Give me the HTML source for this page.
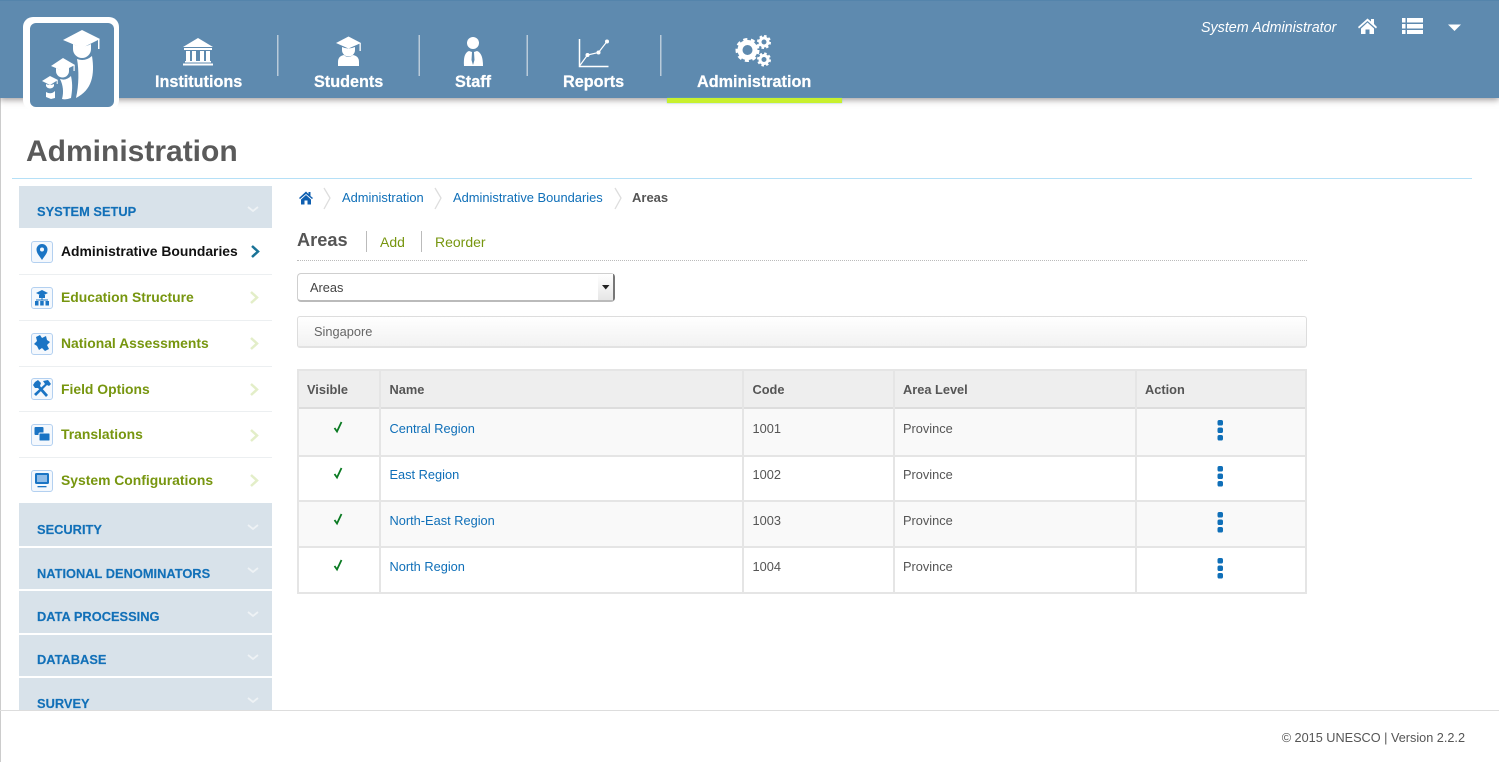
<!DOCTYPE html>
<html lang="en"><head><meta charset="utf-8"><title>Administration</title>
<style>
html,body{margin:0;padding:0;background:#fff}
body{width:1499px;height:762px;overflow:hidden;position:relative;font-family:"Liberation Sans",Arial,sans-serif;color:#555}
.t{position:absolute;white-space:nowrap;line-height:18px;font-size:12.8px}
.b{font-weight:bold}
.a{position:absolute}
.nav{color:#fff;font-weight:bold;font-size:16.2px;top:73px;-webkit-text-stroke:.25px #fff}
.hd{position:absolute;left:19px;width:253px;background:#d8e2ea}
.hdt{color:#1270b8;font-weight:bold;font-size:12.85px;left:37px;-webkit-text-stroke:.15px #1270b8}
.it{color:#77960f;font-weight:bold;font-size:13.9px;left:61px}
.sep{position:absolute;left:19px;width:253px;height:1px;background:#eceff1}
.box{position:absolute;left:31px;width:20px;height:20px;border:1.5px solid #b3d0f0;border-radius:3px;background:#f4f8fd}
.cell{position:absolute;background:#e5e5e5}
a{text-decoration:none;color:#0f6fb8}
</style></head><body>
<div class="a" style="left:0;top:98px;width:1px;height:664px;background:#ccc"></div>
<div class="a" style="left:0;top:0;width:1499px;height:98px;background:#5e8aaf;border-top:1px solid #5484ab;box-sizing:border-box;box-shadow:0 2px 6px rgba(70,60,60,.5)"></div>
<div class="a" style="left:667px;top:98px;width:175px;height:5px;background:#c8f02e;box-shadow:0 0 1px #6cc"></div>
<div class="a" style="left:23px;top:17px;width:96px;height:93px;background:#fff;border-radius:10px"></div>
<div class="a" style="left:30px;top:23px;width:84px;height:84px;background:#5e8aaf;border-radius:6px"></div>

<svg class="a" style="left:0;top:0" width="1499" height="112" viewBox="0 0 1499 112" fill="#fff">
 <!-- logo -->
 <path d="M63 40L82 30L100 39L82 48Z"/><rect x="98" y="39" width="1.500" height="10"/>
 <path d="M73 44Q82 49 91 44V49A9 9 0 0 1 73 49Z"/>
 <path d="M77 59Q85 62 92 56C95 75 92 90 76 98C79 85 79 70 77 59Z"/>
 <path d="M51 66L63 58L75 65L63 71Z"/><rect x="73.500" y="65" width="1.200" height="6"/>
 <path d="M56 68Q63 72 69 67V71A6.500 6.500 0 0 1 56 71Z"/>
 <path d="M60 79Q66 81 71 76C73 85 72 92 71 98Q66 100 62 99C64 92 63 85 60 79Z"/>
 <path d="M42 81L50 76L58 80L50 85Z"/><rect x="56.700" y="80" width="1" height="4"/>
 <path d="M46 84Q50 86 54 84V86A4.500 4.500 0 0 1 46 86Z"/>
 <path d="M46 92Q51 95 55 91V98L51 99L46 97Z"/>
 <!-- institutions -->
 <path d="M198 38L213 47H183Z"/><rect x="184" y="48" width="28" height="2"/>
 <rect x="186" y="51" width="4" height="10"/><rect x="192" y="51" width="4" height="10"/><rect x="200" y="51" width="4" height="10"/><rect x="206" y="51" width="4" height="10"/>
 <rect x="185" y="61" width="26" height="1.500"/><rect x="183" y="63.500" width="30" height="2"/>
 <!-- students -->
 <path d="M336 43L348.500 36.500L361 43L348.500 48.500Z"/><rect x="359.500" y="43" width="1.300" height="8"/>
 <path d="M342 47Q348 50 355 47V50A6.500 6.500 0 0 1 342 50Z"/>
 <path d="M338 66V62Q338 56 344 55Q348 59 353 55Q359 56 359 62V66Z"/>
 <!-- staff -->
 <circle cx="473" cy="43" r="6"/>
 <path d="M464 66Q463 53 469 51L472 52L471.500 60L473 65L474.500 60L474 52L477 51Q483 53 483 66Z"/>
 <!-- reports -->
 <g fill="none" stroke="#fff"><path d="M579.500 39V66.500H608.500" stroke-width="1.500"/><path d="M579.500 66L587.500 55L598.500 52.500L607 41.500" stroke-width="1.200"/></g>
 <circle cx="587.500" cy="55" r="2"/><circle cx="598.500" cy="52.500" r="2"/><circle cx="607" cy="41.500" r="2"/>
 <!-- gears -->
 <g fill="none" stroke="#fff">
  <circle cx="747.500" cy="50" r="7.500" stroke-width="5"/><circle cx="747.500" cy="50" r="10.500" stroke-width="3" stroke-dasharray="4 3.500"/>
  <circle cx="764" cy="42" r="4" stroke-width="3"/><circle cx="764" cy="42" r="6" stroke-width="2" stroke-dasharray="2.500 2.200"/>
  <circle cx="764" cy="59.500" r="4" stroke-width="3"/><circle cx="764" cy="59.500" r="6" stroke-width="2" stroke-dasharray="2.500 2.200"/>
 </g>
 <!-- separators -->
 <g fill="#b9cbda"><rect x="277" y="35" width="1.500" height="41"/><rect x="418.500" y="35" width="1.500" height="41"/><rect x="526.500" y="35" width="1.500" height="41"/><rect x="660" y="35" width="1.500" height="41"/></g>
 <!-- top right -->
 <path d="M1358 27L1367.500 18.500L1371 21.500V19H1374V24L1377 27L1376 28.500L1367.500 21L1359 28.500Z"/>
 <path d="M1361 28.500L1367.500 22.500L1374 28.500V34H1369.500V29.500H1365.500V34H1361Z"/>
 <rect x="1402" y="18" width="3.500" height="4.500"/><rect x="1407" y="18" width="16" height="4.500"/>
 <rect x="1402" y="24" width="3.500" height="4.500"/><rect x="1407" y="24" width="16" height="4.500"/>
 <rect x="1402" y="30" width="3.500" height="4"/><rect x="1407" y="30" width="16" height="4"/>
 <path d="M1448 24.500H1461L1454.500 31Z"/>
</svg>

<div class="t nav" style="left:155px">Institutions</div>
<div class="t nav" style="left:314px">Students</div>
<div class="t nav" style="left:455px">Staff</div>
<div class="t nav" style="left:563px">Reports</div>
<div class="t nav" style="left:697px">Administration</div>
<div class="t" style="left:1201px;top:19px;color:#fff;font-style:italic;font-size:14.300px">System Administrator</div>

<div class="t b" style="left:26px;top:135px;font-size:30px;line-height:34px;color:#5a5a5a">Administration</div>
<div class="a" style="left:12px;top:178px;width:1460px;height:1px;background:#b5e0f7"></div>

<!-- sidebar -->
<div class="a" style="left:0;top:0;width:290px;height:710px;overflow:hidden">
 <div class="hd" style="top:186px;height:42px"></div>
 <div class="hd" style="top:503px;height:43px"></div>
 <div class="hd" style="top:548px;height:41px"></div>
 <div class="hd" style="top:591px;height:42px"></div>
 <div class="hd" style="top:635px;height:41px"></div>
 <div class="hd" style="top:678px;height:42px"></div>
 <div class="t hdt" style="top:203px">SYSTEM SETUP</div>
 <div class="t hdt" style="top:521px">SECURITY</div>
 <div class="t hdt" style="top:565px">NATIONAL DENOMINATORS</div>
 <div class="t hdt" style="top:608px">DATA PROCESSING</div>
 <div class="t hdt" style="top:651px">DATABASE</div>
 <div class="t hdt" style="top:695px">SURVEY</div>
 <svg class="a" style="left:0;top:0" width="290" height="710" fill="none" stroke="#eef2f5" stroke-width="1.800">
  <path d="M248 207L253 211L258 207"/><path d="M248 525L253 529L258 525"/><path d="M248 568L253 572L258 568"/><path d="M248 612L253 616L258 612"/><path d="M248 655L253 659L258 655"/><path d="M248 698L253 702L258 698"/>
 </svg>
</div>
<div class="sep" style="top:274px"></div><div class="sep" style="top:320px"></div><div class="sep" style="top:366px"></div><div class="sep" style="top:411px"></div><div class="sep" style="top:457px"></div>
<div class="t it" style="top:242px;color:#111">Administrative Boundaries</div>
<div class="t it" style="top:288px">Education Structure</div>
<div class="t it" style="top:334px">National Assessments</div>
<div class="t it" style="top:380px">Field Options</div>
<div class="t it" style="top:425px">Translations</div>
<div class="t it" style="top:471px">System Configurations</div>
<div class="box" style="top:241px"></div><div class="box" style="top:287px"></div><div class="box" style="top:333px"></div><div class="box" style="top:378px"></div><div class="box" style="top:424px"></div><div class="box" style="top:470px"></div>
<svg class="a" style="left:0;top:0;" width="290" height="510" fill="#1a74c4">
 <!-- pin -->
 <path fill-rule="evenodd" d="M42 244A5.500 5.500 0 0 1 47.500 249.500C47.500 253.500 44 256.500 42 260C40 256.500 36.500 253.500 36.500 249.500A5.500 5.500 0 0 1 42 244ZM42 247.500A2 2 0 1 0 42 251.500A2 2 0 1 0 42 247.500Z"/>
 <!-- structure -->
 <path d="M36 293L42 290L48 293L42 296Z"/><rect x="39" y="295" width="6" height="3"/><rect x="41.500" y="298" width="1" height="2"/><rect x="36" y="299.500" width="12" height="1"/>
 <rect x="35" y="301" width="3.500" height="4.500"/><rect x="40.200" y="301" width="3.500" height="4.500"/><rect x="45.500" y="301" width="3.500" height="4.500"/>
 <!-- puzzle -->
 <path d="M36 337L40 335L42 338L46 336L47 340L50 342L47 345L49 349L45 351L42 348L39 350L37 346L34 344L37 341Z"/>
 <!-- tools -->
 <path d="M35 382L38 380L41 383L40 386L48 395L46 397L38 388L35 388L33 385Z"/>
 <path d="M43 381L48 380L51 384L49 386L47 385L36 396L34 394L45 384Z"/>
 <!-- translations -->
 <rect x="34.500" y="427" width="9" height="8" rx="1"/><rect x="39" y="433" width="11" height="8" rx="1" stroke="#f4f8fd"/>
 <!-- screen -->
 <rect x="35" y="473" width="14" height="11" rx="1.500"/><rect x="37" y="475" width="10" height="7" fill="#8fbce8"/><rect x="37.500" y="486" width="9" height="1.300"/>
</svg>
<svg class="a" style="left:0;top:0" width="290" height="510" fill="none" stroke-width="2.500">
 <path d="M252 246L258 251.500L252 257" stroke="#1a7397"/>
 <g stroke="#e3eec8"><path d="M251 292L257 297.500L251 303"/><path d="M251 338L257 343.500L251 349"/><path d="M251 384L257 389.500L251 395"/><path d="M251 430L257 435.500L251 441"/><path d="M251 475L257 480.500L251 486"/></g>
</svg>

<!-- breadcrumb -->
<svg class="a" style="left:295px;top:185px" width="340" height="26" fill="none" stroke="#ddd" stroke-width="1.300">
 <path d="M29 3L35 13L29 24"/><path d="M140 3L146 13L140 24"/><path d="M320 3L326 13L320 24"/>
 <path fill="#0f5fb0" stroke="none" d="M4 13L11 6.500L13.500 9V7H15.500V11L18 13L17 14L11 9L5 14ZM6 14.500L11 10L16 14.500V19.500H12.500V15.500H9.500V19.500H6Z"/>
</svg>
<a class="t" style="left:342px;top:189px;font-size:12.9px">Administration</a>
<a class="t" style="left:453px;top:189px;font-size:12.9px">Administrative Boundaries</a>
<div class="t b" style="left:632px;top:189px;font-size:13px">Areas</div>

<div class="t b" style="left:297px;top:231px;font-size:18.2px">Areas</div>
<div class="a" style="left:366px;top:231px;width:1px;height:21px;background:#bbb"></div>
<div class="a" style="left:421px;top:231px;width:1px;height:21px;background:#bbb"></div>
<div class="t" style="left:380px;top:233px;font-size:14px;color:#77960f">Add</div>
<div class="t" style="left:435px;top:233px;font-size:14px;color:#77960f">Reorder</div>
<div class="a" style="left:297px;top:260px;width:1010px;height:0;border-top:1px dotted #bbb"></div>

<!-- select -->
<div class="a" style="left:297px;top:273px;width:318px;height:29px;box-sizing:border-box;border:1px solid #cfcfcf;border-right:2px solid #777;border-bottom:2px solid #bbb;border-radius:4px;background:#fff"></div>
<div class="a" style="left:598px;top:274px;width:15px;height:26px;background:linear-gradient(#fff,#e6e6e6)"></div>
<svg class="a" style="left:602px;top:285px" width="8" height="5"><path d="M0 0H7.500L3.750 4.500Z" fill="#222"/></svg>
<div class="t" style="left:310px;top:279px;color:#444">Areas</div>

<div class="a" style="left:297px;top:316px;width:1010px;height:32px;box-sizing:border-box;border:1px solid #ddd;border-bottom:2px solid #e2e2e2;border-radius:3px;background:linear-gradient(#fff,#f2f2f2)"></div>
<div class="t" style="left:314px;top:323px;color:#666">Singapore</div>

<!-- table -->
<div class="a" style="left:297px;top:369px;width:1010px;height:39px;background:#eee"></div>
<div class="a" style="left:297px;top:408px;width:1010px;height:47px;background:#f9f9f9"></div>
<div class="a" style="left:297px;top:501px;width:1010px;height:46px;background:#f9f9f9"></div>
<div class="cell" style="left:297px;top:369px;width:1010px;height:2px"></div>
<div class="cell" style="left:297px;top:407px;width:1010px;height:2px;background:#ddd"></div>
<div class="cell" style="left:297px;top:454.500px;width:1010px;height:2px"></div>
<div class="cell" style="left:297px;top:500px;width:1010px;height:2px"></div>
<div class="cell" style="left:297px;top:546px;width:1010px;height:2px"></div>
<div class="cell" style="left:297px;top:592px;width:1010px;height:2px"></div>
<div class="cell" style="left:297px;top:369px;width:2px;height:225px"></div>
<div class="cell" style="left:378.500px;top:369px;width:2px;height:225px"></div>
<div class="cell" style="left:741.500px;top:369px;width:2px;height:225px"></div>
<div class="cell" style="left:892.500px;top:369px;width:2px;height:225px"></div>
<div class="cell" style="left:1134.500px;top:369px;width:2px;height:225px"></div>
<div class="cell" style="left:1305px;top:369px;width:2px;height:225px"></div>
<div class="t b" style="left:307px;top:381px">Visible</div>
<div class="t b" style="left:389.500px;top:381px">Name</div>
<div class="t b" style="left:752.500px;top:381px">Code</div>
<div class="t b" style="left:903px;top:381px">Area Level</div>
<div class="t b" style="left:1145px;top:381px">Action</div>

<a class="t" style="left:389.500px;top:420px">Central Region</a><div class="t" style="left:752.500px;top:420px">1001</div><div class="t" style="left:903px;top:420px">Province</div>
<a class="t" style="left:389.500px;top:466px">East Region</a><div class="t" style="left:752.500px;top:466px">1002</div><div class="t" style="left:903px;top:466px">Province</div>
<a class="t" style="left:389.500px;top:512px">North-East Region</a><div class="t" style="left:752.500px;top:512px">1003</div><div class="t" style="left:903px;top:512px">Province</div>
<a class="t" style="left:389.500px;top:558px">North Region</a><div class="t" style="left:752.500px;top:558px">1004</div><div class="t" style="left:903px;top:558px">Province</div>

<svg class="a" style="left:0;top:0" width="1499" height="600">
 <g fill="none" stroke="#0a7a22" stroke-width="1.800">
  <path d="M334.500 428L337 431.500L341.500 422"/><path d="M334.500 474L337 477.500L341.500 468"/><path d="M334.500 520L337 523.500L341.500 514"/><path d="M334.500 566L337 569.500L341.500 560"/>
 </g>
 <g fill="#0f6fb8">
  <rect x="1217.500" y="420" width="5.500" height="5.500" rx="1.800"/><rect x="1217.500" y="427.500" width="5.500" height="5.500" rx="1.800"/><rect x="1217.500" y="435" width="5.500" height="5.500" rx="1.800"/>
  <rect x="1217.500" y="466" width="5.500" height="5.500" rx="1.800"/><rect x="1217.500" y="473.500" width="5.500" height="5.500" rx="1.800"/><rect x="1217.500" y="481" width="5.500" height="5.500" rx="1.800"/>
  <rect x="1217.500" y="512" width="5.500" height="5.500" rx="1.800"/><rect x="1217.500" y="519.500" width="5.500" height="5.500" rx="1.800"/><rect x="1217.500" y="527" width="5.500" height="5.500" rx="1.800"/>
  <rect x="1217.500" y="558" width="5.500" height="5.500" rx="1.800"/><rect x="1217.500" y="565.500" width="5.500" height="5.500" rx="1.800"/><rect x="1217.500" y="573" width="5.500" height="5.500" rx="1.800"/>
 </g>
</svg>

<!-- footer -->
<div class="a" style="left:0;top:710px;width:1499px;height:1px;background:#ddd"></div>
<div class="t" style="right:34px;top:729px;font-size:12.7px">© 2015 UNESCO | Version 2.2.2</div>
</body></html>
